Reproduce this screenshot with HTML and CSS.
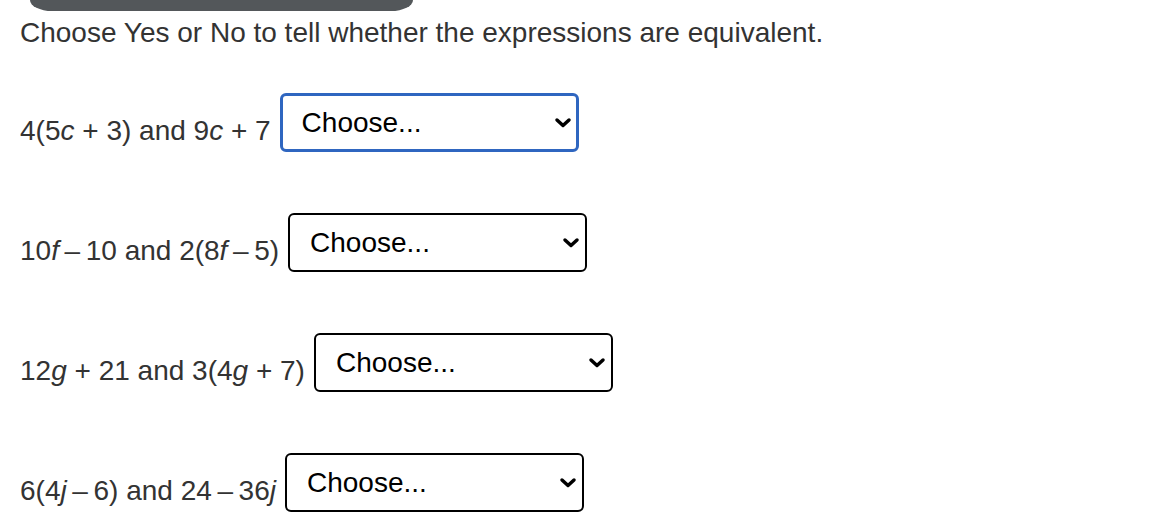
FILE: index.html
```html
<!DOCTYPE html>
<html>
<head>
<meta charset="utf-8">
<link rel="stylesheet" href="styles.css">
</head>
<body>
<div class="pill"></div>
<p class="prompt">Choose Yes or No to tell whether the expressions are equivalent.</p>
<div class="rows">
  <div class="row">
    <span class="expr">4(5<i>c</i> + 3) and 9<i>c</i> + 7</span>
    <div class="select focused"><span>Choose...</span><svg class="chev" viewBox="0 0 18 11"><path d="M3 3 L9 8.5 L15 3" /></svg></div>
  </div>
  <div class="row">
    <span class="expr">10<i>f</i>&thinsp;–&thinsp;10 and 2(8<i>f</i>&thinsp;–&thinsp;5)</span>
    <div class="select"><span>Choose...</span><svg class="chev" viewBox="0 0 18 11"><path d="M3 3 L9 8.5 L15 3" /></svg></div>
  </div>
  <div class="row">
    <span class="expr">12<i>g</i> + 21 and 3(4<i>g</i> + 7)</span>
    <div class="select"><span>Choose...</span><svg class="chev" viewBox="0 0 18 11"><path d="M3 3 L9 8.5 L15 3" /></svg></div>
  </div>
  <div class="row">
    <span class="expr">6(4<i>j</i>&thinsp;–&thinsp;6) and 24&thinsp;–&thinsp;36<i>j</i></span>
    <div class="select"><span>Choose...</span><svg class="chev" viewBox="0 0 18 11"><path d="M3 3 L9 8.5 L15 3" /></svg></div>
  </div>
</div>
</body>
</html>
```
FILE: styles.css
```css
html, body {
  margin: 0;
  padding: 0;
  background: #ffffff;
}
body {
  font-family: "Liberation Sans", Arial, sans-serif;
  color: #333333;
}
.pill {
  margin-left: 30px;
  width: 383px;
  height: 11px;
  background: #53575a;
  border-radius: 0 0 22px 22px / 0 0 11px 11px;
}
.prompt {
  margin: 6px 0 0 20px;
  font-size: 28px;
  line-height: 32px;
}
.rows {
  display: flex;
  flex-direction: column;
  gap: 61px;
  margin-top: 44px;
  padding-left: 20px;
}
.row {
  display: flex;
  align-items: center;
  height: 59px;
}
.expr {
  font-size: 28px;
  line-height: 32px;
  margin-top: 16px;
  margin-right: 9px;
  white-space: nowrap;
}
.expr i {
  font-style: italic;
}
.select {
  box-sizing: border-box;
  width: 299px;
  height: 59px;
  border: 2px solid #000;
  border-radius: 6px;
  display: flex;
  align-items: center;
  justify-content: space-between;
  padding: 0 5px 0 20px;
  color: #000;
  font-size: 28px;
  background: #fff;
}
.select span {
  line-height: 32px;
  margin-top: 0;
}
.select.focused {
  border: 3px solid #2f66c0;
  padding-left: 19px;
  padding-right: 4px;
}
.chev {
  width: 18px;
  height: 11px;
}
.chev path {
  fill: none;
  stroke: #000;
  stroke-width: 3.5;
  stroke-linecap: round;
  stroke-linejoin: round;
}
```
